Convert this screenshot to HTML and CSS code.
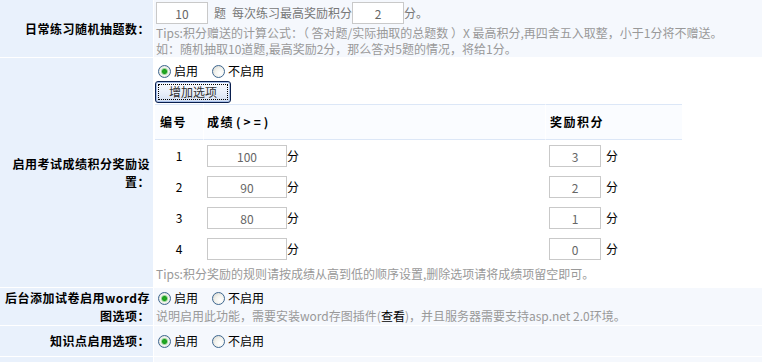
FILE: index.html
```html
<!DOCTYPE html>
<html lang="zh-CN">
<head>
<meta charset="utf-8">
<title>积分设置</title>
<link rel="stylesheet" href="styles.css">
</head>
<body>
<div class="form">
  <div class="label">日常练习随机抽题数：</div>
  <div class="field light r1">
    <div class="line1"><input class="txt short" value="10"><span class="muted">&ensp;题&ensp;每次练习最高奖励积分</span><input class="txt short" value="2"><span class="muted">分。</span></div>
    <div class="tip">Tips:积分赠送的计算公式：（ 答对题/实际抽取的总题数 ）X 最高积分,再四舍五入取整，小于1分将不赠送。</div>
    <div class="tip">如：随机抽取10道题,最高奖励2分，那么答对5题的情况，将给1分。</div>
  </div>

  <div class="label">启用考试成绩积分奖励设置：</div>
  <div class="field white r2">
    <div class="radios"><label class="opt"><input type="radio" class="radio" name="exam" checked>启用</label><label class="opt"><input type="radio" class="radio" name="exam">不启用</label></div>
    <button class="btn" type="button">增加选项</button>
    <div class="score">
      <div class="th c1">编号</div>
      <div class="th c2">成绩<span class="ge">(&gt;=)</span></div>
      <div class="th c3">奖励积分</div>

      <div class="td num">1</div>
      <div class="td c2"><input class="txt long" value="100">分</div>
      <div class="td c3"><input class="txt short" value="3"><span class="unit">分</span></div>

      <div class="td num">2</div>
      <div class="td c2"><input class="txt long" value="90">分</div>
      <div class="td c3"><input class="txt short" value="2"><span class="unit">分</span></div>

      <div class="td num">3</div>
      <div class="td c2"><input class="txt long" value="80">分</div>
      <div class="td c3"><input class="txt short" value="1"><span class="unit">分</span></div>

      <div class="td num">4</div>
      <div class="td c2"><input class="txt long" value="">分</div>
      <div class="td c3"><input class="txt short" value="0"><span class="unit">分</span></div>
    </div>
    <div class="tip tip2">Tips:积分奖励的规则请按成绩从高到低的顺序设置,删除选项请将成绩项留空即可。</div>
  </div>

  <div class="label">后台添加试卷启用word存图选项：</div>
  <div class="field light r3">
    <div class="radios"><label class="opt"><input type="radio" class="radio" name="word" checked>启用</label><label class="opt"><input type="radio" class="radio" name="word">不启用</label></div>
    <div class="desc">说明启用此功能，需要安装word存图插件(<a class="link" href="#">查看</a>)，并且服务器需要支持asp.net 2.0环境。</div>
  </div>

  <div class="label">知识点启用选项：</div>
  <div class="field light r4">
    <div class="radios"><label class="opt"><input type="radio" class="radio" name="kp" checked>启用</label><label class="opt"><input type="radio" class="radio" name="kp">不启用</label></div>
  </div>

  <div class="label r5"></div>
  <div class="field light r5"></div>
</div>
</body>
</html>
```
FILE: styles.css
```css
* { box-sizing: border-box; }
html, body { margin: 0; background: #fff; }
body {
  font: 12px/18px "Noto Sans CJK SC", "Noto Sans", sans-serif;
  color: #000;
}
.form {
  display: grid;
  grid-template-columns: 153px 1fr;
  column-gap: 1px;
  row-gap: 1px;
  background: #fff;
}
.label {
  background: #e9f1fc;
  display: flex;
  align-items: center;
  justify-content: flex-end;
  text-align: right;
  padding: 0 3px 0 2px;
  font-weight: bold;
  letter-spacing: 0.5px;
  line-height: 18px;
}
.field { padding-left: 2px; }
.light { background: #f5f8fd; }
.white { background: #fff; }

.r1 { padding-top: 2px; height: 57px; }
.line1 { height: 23px; line-height: 22px; white-space: nowrap; }
.muted { color: #777; }
.tip { color: #999; line-height: 16px; white-space: nowrap; }

.txt {
  height: 22px;
  margin: 0;
  padding: 0;
  border: 1px solid #c9c9c9;
  background: #fff;
  color: #666;
  text-align: center;
  font: 12px "Noto Sans CJK SC", "Noto Sans", sans-serif;
  vertical-align: top;
  outline: none;
}
.short { width: 52px; }
.long { width: 80px; }

.r2 { padding-top: 4px; height: 229px; }
.radios { height: 18px; display: flex; align-items: center; }
.opt { display: inline-flex; align-items: center; margin-right: 12px; }
.radio {
  -webkit-appearance: none;
  appearance: none;
  width: 13px;
  height: 13px;
  margin: 0 3px 0 2px;
  border: 1px solid #3e6790;
  border-radius: 50%;
  background: radial-gradient(circle at 65% 65%, #ffffff 0, #f3f3ee 45%, #d3d3cc 100%);
}
.radio:checked {
  background: radial-gradient(circle at 50% 50%, #20b020 0, #1c9a1c 2px, #9ad89a 3px, #f4f4f0 4px, #ecece6 60%, #d3d3cc 100%);
}

.btn {
  display: block;
  width: 76px;
  height: 22px;
  margin: 1px 0 1px -1px;
  padding: 0;
  font: 12px/18px "Noto Sans CJK SC", "Noto Sans", sans-serif;
  color: #333;
  border: 1px solid #0a1f4e;
  border-radius: 3px;
  background: linear-gradient(#fbfcff, #e8eef9 55%, #d4dff2);
  box-shadow: inset 0 0 0 1px #a9c1ea;
  outline: 1px dotted #000;
  outline-offset: -4px;
}

.score {
  display: grid;
  grid-template-columns: 48px 342px 137px;
  margin-left: -1px;
}
.th {
  height: 36px;
  background: #fafcff;
  border-top: 1px solid #dce7f7;
  border-bottom: 1px solid #dce7f7;
  display: flex;
  align-items: center;
  font-weight: bold;
  letter-spacing: 1.5px;
}
.th.c1 { padding-left: 5px; }
.th.c2, .th.c3 { border-left: 1px solid #fff; padding-left: 3px; }
.th.c3 { padding-left: 4px; }
.ge { letter-spacing: 3px; margin-left: 2px; }

.td {
  height: 31px;
  padding-top: 5px;
  line-height: 22px;
  white-space: nowrap;
}
.td.num { text-align: center; }
.td.c2 { padding-left: 4px; }
.td.c3 { padding-left: 4px; }
.td .txt { vertical-align: top; }
.unit { margin-left: 5px; }

.tip2 { line-height: 20px; }

.r3 { padding-top: 1px; height: 37px; }
.desc { color: #999; line-height: 17px; white-space: nowrap; }
.link { color: #000; text-decoration: none; }

.r4 { height: 30px; display: flex; align-items: center; }
.r5 { height: 20px; }
```
